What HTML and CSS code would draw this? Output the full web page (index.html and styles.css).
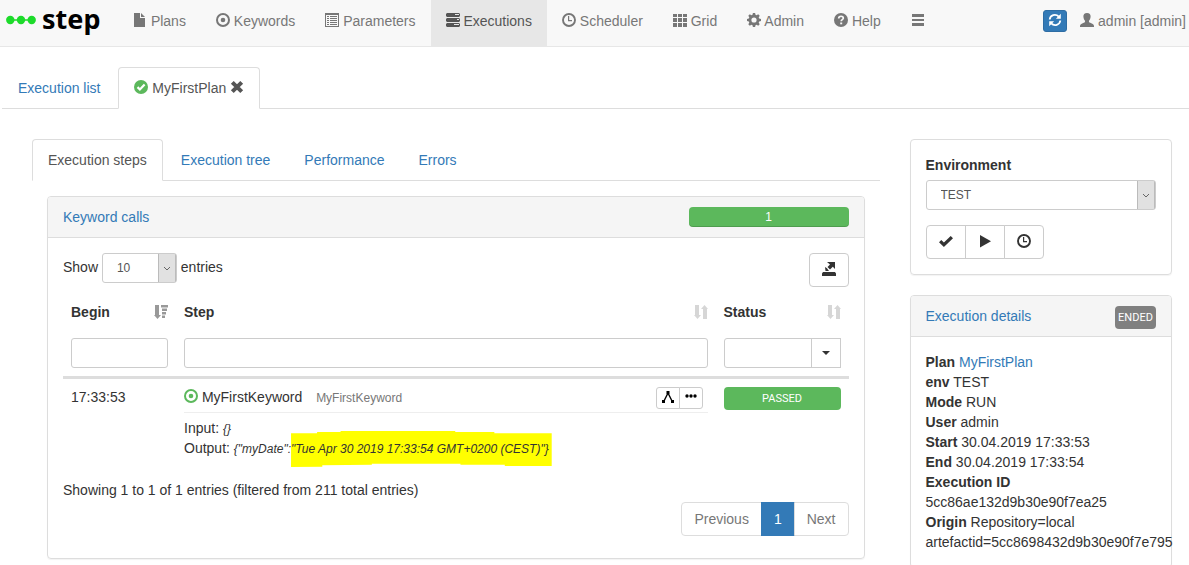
FILE: index.html
```html
<!DOCTYPE html>
<html lang="en">
<head>
    <meta charset="UTF-8">
    <meta name="viewport" content="width=device-width, initial-scale=1.0">
    <title>step - Executions</title>
    <link rel="stylesheet" href="styles.css">
</head>
<body>

    <!-- Icon set -->
    <svg class="icon-defs" aria-hidden="true">
        <symbol id="file" viewBox="0 0 14 14"><path d="M1 0h6v5h5v9H1z M8 0l4 4H8z"/></symbol>
        <symbol id="record" viewBox="0 0 14 14"><circle cx="7" cy="7" r="6" fill="none" stroke="currentColor" stroke-width="2"/><circle cx="7" cy="7" r="2.3"/></symbol>
        <symbol id="list" viewBox="0 0 14 14"><path fill-rule="evenodd" d="M0 0h14v14H0z M1 2v11h12V2z M2 3h2v1H2z M2 5h2v1H2z M2 7h2v1H2z M2 9h2v1H2z M2 11h2v1H2z M5 3h7v1H5z M5 5h7v1H5z M5 7h7v1H5z M5 9h7v1H5z M5 11h7v1H5z"/></symbol>
        <symbol id="tasks" viewBox="0 0 14 14"><path fill-rule="evenodd" d="M1 0h12l1 1v2l-1 1H1L0 3V1z M9 1v1h4V1z M1 5h12l1 1v2l-1 1H1L0 8V6z M11 6v1h2V6z M1 10h12l1 1v2l-1 1H1l-1-1v-2z M8 11v1h5v-1z"/></symbol>
        <symbol id="time" viewBox="0 0 14 14"><circle cx="7" cy="7" r="6" fill="none" stroke="currentColor" stroke-width="1.9"/><path d="M6 3h1.200v4H10v1.200H6z"/></symbol>
        <symbol id="grid" viewBox="0 0 14 14"><path d="M0 1h4v3H0z M5 1h4v3H5z M10 1h4v3h-4z M0 5h4v4H0z M5 5h4v4H5z M10 5h4v4h-4z M0 10h4v4H0z M5 10h4v4H5z M10 10h4v4h-4z"/></symbol>
        <symbol id="cog" viewBox="0 0 14 14"><path fill-rule="evenodd" d="M5.900 0h2.200l.4 1.800 1.100.5 1.600-1 1.500 1.500-1 1.600.5 1.100 1.800.4v2.200l-1.800.4-.5 1.100 1 1.600-1.500 1.500-1.600-1-1.100.5-.4 1.800H5.900l-.4-1.800-1.100-.5-1.600 1-1.500-1.500 1-1.600-.5-1.100L0 8.100V5.900l1.800-.4.5-1.100-1-1.600 1.500-1.500 1.600 1 1.100-.5z M7 4.400a2.600 2.600 0 1 0 0 5.200a2.600 2.600 0 1 0 0-5.200z"/></symbol>
        <symbol id="question" viewBox="0 0 14 14"><circle cx="7" cy="7" r="7"/><path d="M4.700 5.600C4.700 2.500 9.400 2.600 9.300 5.200C9.200 6.800 7.200 6.500 7.200 8.300" fill="none" stroke="#f8f8f8" stroke-width="1.700"/><path d="M6.200 9.500h2v1.800h-2z" fill="#f8f8f8"/></symbol>
        <symbol id="menu" viewBox="0 0 14 14"><path d="M1 1h12v3H1z M1 6h12v2H1z M1 10h12v3H1z"/></symbol>
        <symbol id="refresh" viewBox="0 0 14 14"><g fill="none" stroke="currentColor" stroke-width="1.800"><path d="M1.700 6.500C2.200 2 7.500.3 10.800 3.600"/><path d="M12.300 7.500C11.800 12 6.500 13.700 3.200 10.400"/></g><path d="M12.800.800v5H7.900z M1.200 13.200v-5h4.900z"/></symbol>
        <symbol id="user" viewBox="0 0 14 14"><path d="M7 0c2.500 0 3.800 1.500 3.600 3.700-.2 2-.8 3.200-1.600 4-.2 1.300 0 1.500 1.200 2 2.500 1 3.800 1.500 3.800 3.600v.7H0v-.7c0-2.100 1.300-2.600 3.800-3.600C5 9.200 5.200 9 5 7.700c-.8-.8-1.400-2-1.600-4C3.200 1.500 4.500 0 7 0z"/></symbol>
        <symbol id="ok-circle" viewBox="0 0 14 14"><circle cx="7" cy="7" r="7"/><path d="M3.500 7.100l2.400 2.400 4.700-4.900" fill="none" stroke="#fff" stroke-width="2.200"/></symbol>
        <symbol id="remove" viewBox="0 0 14 14"><path d="M2.300 2.300l9.400 9.400M11.700 2.300l-9.400 9.400" stroke="currentColor" stroke-width="4"/></symbol>
        <symbol id="export" viewBox="0 0 14 14"><path d="M5 0h8v7l-2.200-2.200L8 7.500 5.500 5 8 2.400z M3 5l2 1.200 2 2.800H3.500z M1 10h12l1 1.500V14H0v-2.500z"/></symbol>
        <symbol id="sort" viewBox="0 0 14 14"><path d="M1 0h4v10h2l-3.500 4L0 10h1z M9 14V4H7l3.500-4L14 4h-1v10z"/></symbol>
        <symbol id="sort-desc" viewBox="0 0 14 14"><path d="M1 0h4v10h2l-3.500 4L0 10h1z M7 0h8v2.500H7z M8 3.500h5V6H8z M8 7h4v2.500H8z M8 10.500h3V13H8z"/></symbol>
        <symbol id="tree" viewBox="0 0 14 14"><path d="M3 11l4-8 4 8" fill="none" stroke="currentColor" stroke-width="1.400"/><path d="M5.500 1h3v3h-3z M1 10h3v3H1z M10 10h3v3h-3z"/></symbol>
        <symbol id="dots" viewBox="0 0 14 14"><circle cx="3" cy="6" r="1.700"/><circle cx="7" cy="6" r="1.700"/><circle cx="11" cy="6" r="1.700"/></symbol>
        <symbol id="ok" viewBox="0 0 14 14"><path d="M0 8.300L2.300 6l2.600 2.500L11.700 2 14 4.300 4.900 13z"/></symbol>
        <symbol id="play" viewBox="0 0 14 14"><path d="M2 1l11 6.200L2 13.400z"/></symbol>
    </svg>

    <nav class="navbar">
        <a class="brand" href="#">
            <svg class="brand-dots" viewBox="0 0 30 10" aria-hidden="true"><path d="M4 5h22" stroke="#1ddb2b" stroke-width="1.500"/><circle cx="4.300" cy="5" r="4.200"/><circle cx="15" cy="5" r="4.200"/><circle cx="25.700" cy="5" r="4.200"/></svg>
            <span class="brand-name">step</span>
        </a>
        <ul class="nav-menu">
            <li><a href="#"><svg class="icon"><use href="#file"/></svg> Plans</a></li>
            <li><a href="#"><svg class="icon"><use href="#record"/></svg> Keywords</a></li>
            <li><a href="#"><svg class="icon"><use href="#list"/></svg> Parameters</a></li>
            <li class="active"><a href="#"><svg class="icon"><use href="#tasks"/></svg> Executions</a></li>
            <li><a href="#"><svg class="icon"><use href="#time"/></svg> Scheduler</a></li>
            <li><a href="#"><svg class="icon"><use href="#grid"/></svg> Grid</a></li>
            <li><a href="#"><svg class="icon"><use href="#cog"/></svg> Admin</a></li>
            <li><a href="#"><svg class="icon"><use href="#question"/></svg> Help</a></li>
            <li><a href="#" aria-label="Menu"><svg class="icon"><use href="#menu"/></svg></a></li>
        </ul>
        <div class="nav-right">
            <button class="btn-refresh" type="button" aria-label="Refresh"><svg class="icon"><use href="#refresh"/></svg></button>
            <a class="user" href="#"><svg class="icon"><use href="#user"/></svg> admin [admin]</a>
        </div>
    </nav>

    <ul class="tabs main-tabs">
        <li><a class="tab" href="#">Execution list</a></li>
        <li>
            <div class="tab active">
                <a href="#"><svg class="icon green"><use href="#ok-circle"/></svg> MyFirstPlan</a>
                <button class="btn-close" type="button" aria-label="Close"><svg class="icon"><use href="#remove"/></svg></button>
            </div>
        </li>
    </ul>

    <div class="row">
        <main class="col-main">
            <ul class="tabs">
                <li><a class="tab active" href="#">Execution steps</a></li>
                <li><a class="tab" href="#">Execution tree</a></li>
                <li><a class="tab" href="#">Performance</a></li>
                <li><a class="tab" href="#">Errors</a></li>
            </ul>

            <section class="panel steps-panel">
                <div class="panel-heading">
                    <a href="#">Keyword calls</a>
                    <div class="progress">1</div>
                </div>
                <div class="panel-body">
                    <div class="toolbar">
                        <label>Show
                            <select class="select select-small"><option>10</option></select>
                            entries</label>
                        <button class="btn" type="button" aria-label="Export"><svg class="icon"><use href="#export"/></svg></button>
                    </div>

                    <table class="steps">
                        <colgroup>
                            <col class="col-begin">
                            <col>
                            <col class="col-status">
                        </colgroup>
                        <thead>
                            <tr>
                                <th><div class="th">Begin <svg class="icon sorted"><use href="#sort-desc"/></svg></div></th>
                                <th><div class="th">Step <svg class="icon unsorted"><use href="#sort"/></svg></div></th>
                                <th><div class="th">Status <svg class="icon unsorted"><use href="#sort"/></svg></div></th>
                            </tr>
                            <tr class="filters">
                                <td><input class="filter" type="text" aria-label="Begin"></td>
                                <td><input class="filter" type="text" aria-label="Step"></td>
                                <td>
                                    <div class="input-group">
                                        <input class="filter" type="text" aria-label="Status">
                                        <button class="btn-caret" type="button" aria-label="Choose status"><span class="caret"></span></button>
                                    </div>
                                </td>
                            </tr>
                        </thead>
                        <tbody>
                            <tr>
                                <td>17:33:53</td>
                                <td>
                                    <div class="step-head">
                                        <div><svg class="icon green"><use href="#record"/></svg> MyFirstKeyword <small class="keyword">MyFirstKeyword</small></div>
                                        <div class="btn-group">
                                            <button class="btn btn-xs" type="button" aria-label="Show in tree"><svg class="icon"><use href="#tree"/></svg></button>
                                            <button class="btn btn-xs" type="button" aria-label="More"><svg class="icon"><use href="#dots"/></svg></button>
                                        </div>
                                    </div>
                                    <div>Input: <em class="json">{}</em></div>
                                    <div>Output: <em class="json">{"myDate":<mark>"Tue Apr 30 2019 17:33:54 GMT+0200 (CEST)"}</mark></em></div>
                                </td>
                                <td><div class="badge passed">PASSED</div></td>
                            </tr>
                        </tbody>
                    </table>

                    <div class="info">Showing 1 to 1 of 1 entries (filtered from 211 total entries)</div>
                    <ul class="pagination">
                        <li><a href="#">Previous</a></li>
                        <li class="active"><a href="#">1</a></li>
                        <li><a href="#">Next</a></li>
                    </ul>
                </div>
            </section>
        </main>

        <aside class="col-side">
            <section class="panel">
                <div class="panel-body">
                    <label class="env-label" for="environment">Environment</label>
                    <select class="select select-wide" id="environment"><option>TEST</option></select>
                    <div class="btn-group">
                        <button class="btn" type="button" aria-label="Simulate"><svg class="icon"><use href="#ok"/></svg></button>
                        <button class="btn" type="button" aria-label="Run"><svg class="icon"><use href="#play"/></svg></button>
                        <button class="btn" type="button" aria-label="Schedule"><svg class="icon"><use href="#time"/></svg></button>
                    </div>
                </div>
            </section>

            <section class="panel">
                <div class="panel-heading">
                    <a href="#">Execution details</a>
                    <div class="badge ended">ENDED</div>
                </div>
                <div class="panel-body">
                    <div><b>Plan</b> <a href="#">MyFirstPlan</a></div>
                    <div><b>env</b> TEST</div>
                    <div><b>Mode</b> RUN</div>
                    <div><b>User</b> admin</div>
                    <div><b>Start</b> 30.04.2019 17:33:53</div>
                    <div><b>End</b> 30.04.2019 17:33:54</div>
                    <div><b>Execution ID</b></div>
                    <div>5cc86ae132d9b30e90f7ea25</div>
                    <div><b>Origin</b> Repository=local</div>
                    <div>artefactid=5cc8698432d9b30e90f7e795</div>
                </div>
            </section>
        </aside>
    </div>

</body>
</html>
```
FILE: styles.css
```css
* {
    box-sizing: border-box;
}

body {
    margin: 0;
    background-color: #fff;
    color: #333;
    font-family: "Liberation Sans", Arial, sans-serif;
    font-size: 14px;
    line-height: 20px;
}

a {
    color: #337ab7;
    text-decoration: none;
}

ul {
    list-style: none;
    margin: 0;
    padding: 0;
}

button,
input,
select {
    font-family: inherit;
    color: inherit;
}

button {
    cursor: pointer;
}

.icon-defs {
    display: none;
}

.icon {
    width: 14px;
    height: 14px;
    fill: currentColor;
    vertical-align: -1px;
}

.green {
    color: #5cb85c;
}

/* Navbar */
.navbar {
    display: flex;
    background-color: #f8f8f8;
    border-bottom: 1px solid #e7e7e7;
}

.brand {
    display: flex;
    align-items: center;
    width: 118px;
    padding: 0 0 7px 6px;
    gap: 6px;
    color: #000;
}

.brand-dots {
    width: 30px;
    height: 10px;
    fill: #1ddb2b;
}

.brand-name {
    padding-bottom: 2px;
    font-family: "Noto Sans", "Open Sans", sans-serif;
    font-size: 27px;
    font-weight: bold;
    line-height: 32px;
}

.nav-menu {
    display: flex;
}

.nav-menu a {
    display: block;
    padding: 11px 15px 15px;
    color: #777;
}

.nav-menu .active a {
    background-color: #e7e7e7;
    color: #555;
}

.nav-right {
    display: flex;
    align-items: flex-start;
    gap: 13px;
    margin-left: auto;
    padding: 10px 3px 0 0;
}

.btn-refresh {
    width: 24px;
    height: 22px;
    padding: 0;
    border: 1px solid #2e6da4;
    border-radius: 3px;
    background-color: #337ab7;
    color: #fff;
}

.user {
    padding-top: 1px;
    color: #777;
}

/* Tabs */
.tabs {
    display: flex;
    border-bottom: 1px solid #ddd;
}

.main-tabs {
    margin: 20px 0 30px 2px;
}

.tabs li {
    margin: 0 2px -1px 0;
}

.tab {
    display: block;
    padding: 10px 15px;
    border: 1px solid transparent;
    border-radius: 4px 4px 0 0;
}

.tab.active {
    border-color: #ddd #ddd #fff;
    background-color: #fff;
    color: #555;
}

.tab.active a {
    color: #555;
}

.btn-close {
    padding: 0;
    border: 0;
    background: none;
    color: #555;
    font-size: 14px;
    line-height: 20px;
}

/* Columns */
.row {
    display: flex;
    margin: 0 2px 0 17px;
}

.col-main {
    width: 75%;
    padding: 0 15px;
}

.col-side {
    width: 25%;
    padding: 0 15px;
}

/* Panels */
.panel {
    margin-bottom: 20px;
    border: 1px solid #ddd;
    border-radius: 4px;
    box-shadow: 0 1px 1px rgba(0, 0, 0, 0.05);
}

.steps-panel {
    margin: 15px 15px 0;
}

.steps-panel .panel-body {
    padding-bottom: 22px;
}

.panel-heading {
    display: flex;
    justify-content: space-between;
    align-items: flex-start;
    height: 41px;
    padding: 10px 15px;
    border-bottom: 1px solid #ddd;
    border-radius: 3px 3px 0 0;
    background-color: #f5f5f5;
}

.panel-body {
    padding: 15px;
}

.progress {
    width: 160px;
    height: 20px;
    border-radius: 4px;
    background-color: #5cb85c;
    box-shadow: inset 0 -1px 0 rgba(0, 0, 0, 0.15);
    color: #fff;
    font-size: 12px;
    text-align: center;
}

.badge {
    padding: 1px 4px 0;
    border-radius: 4px;
    color: #fff;
    font-family: Roboto, sans-serif;
    font-size: 11px;
    line-height: 22px;
    text-align: center;
}

.passed {
    background-color: #5cb85c;
}

.ended {
    min-width: 41px;
    padding: 1px 3px 0;
    background-color: #808080;
}

/* Form controls and buttons */
.select {
    height: 30px;
    padding: 0 24px 0 14px;
    border: 1px solid #ccc;
    border-radius: 3px;
    appearance: none;
    background: #fff url("data:image/svg+xml,%3Csvg xmlns='http://www.w3.org/2000/svg' width='18' height='28'%3E%3Cpath d='M0 0h18v28H0z' fill='%23e1e1e1'/%3E%3Cpath d='M.5 0v28M17.5 0v28' stroke='%23bbb'/%3E%3Cpath d='M6 13l3 3 3-3' fill='none' stroke='%23666'/%3E%3C/svg%3E") right center no-repeat;
    color: #555;
    font-size: 12px;
}

.select-small {
    width: 75px;
}

.select-wide {
    display: block;
    width: 100%;
    margin-bottom: 15px;
}

.env-label {
    display: block;
    margin-bottom: 5px;
    font-weight: bold;
}

.btn {
    width: 40px;
    height: 34px;
    padding: 0;
    border: 1px solid #ccc;
    border-radius: 4px;
    background-color: #fff;
}

.btn-group {
    display: flex;
}

.btn-group .btn + .btn {
    margin-left: -1px;
}

.btn-group .btn:not(:last-child) {
    border-top-right-radius: 0;
    border-bottom-right-radius: 0;
}

.btn-group .btn:not(:first-child) {
    border-top-left-radius: 0;
    border-bottom-left-radius: 0;
}

.btn-xs {
    width: 24px;
    height: 22px;
    border-radius: 3px;
    color: #000;
}

.toolbar {
    display: flex;
    justify-content: space-between;
    align-items: flex-start;
    margin-bottom: 7px;
}

/* Steps table */
.steps {
    width: 100%;
    border-collapse: collapse;
    table-layout: fixed;
}

.col-begin {
    width: 113px;
}

.col-status {
    width: 133px;
}

.steps th,
.steps td {
    padding: 8px;
    text-align: left;
    vertical-align: top;
}

.steps tbody {
    border-top: 3px solid #ddd;
}

.th {
    display: flex;
    justify-content: space-between;
    align-items: center;
}

.sorted {
    color: #999;
    overflow: visible;
}

.unsorted {
    color: #d6d6d6;
}

.filter {
    display: block;
    width: 100%;
    height: 30px;
    padding: 5px 10px;
    border: 1px solid #ccc;
    border-radius: 3px;
    font-size: 12px;
}

.input-group {
    display: flex;
}

.input-group .filter {
    min-width: 0;
    border-radius: 3px 0 0 3px;
}

.btn-caret {
    display: flex;
    flex: 0 0 30px;
    align-items: center;
    justify-content: center;
    margin-left: -1px;
    padding: 0;
    border: 1px solid #ccc;
    background-color: #fff;
}

.caret {
    border-top: 4px solid #333;
    border-right: 4px solid transparent;
    border-left: 4px solid transparent;
}

.step-head {
    display: flex;
    justify-content: space-between;
    margin-bottom: 5px;
    padding: 0 5px 3px 0;
    border-bottom: 1px solid #eee;
}

.keyword {
    margin-left: 10px;
    color: #777;
    font-size: 12px;
}

.json {
    font-size: 12px;
    line-height: 1;
}

/* Marker stroke with uneven edges */
mark {
    padding: 11px 3px 11px 0;
    background-color: #ff0;
    color: inherit;
    clip-path: polygon(0 6%, 10% 6%, 10% 3%, 19% 3%, 19% 0, 63% 0, 63% 3%, 78% 3%, 78% 6%, 100% 6%, 100% 97%, 82% 97%, 82% 94%, 65% 94%, 65% 91%, 31% 91%, 31% 94%, 12% 95%, 12% 99%, 0 100%);
}

.info {
    margin-top: 14px;
}

.pagination {
    display: flex;
    justify-content: flex-end;
    margin-top: 2px;
}

.pagination a {
    display: block;
    margin-left: -1px;
    padding: 6px 12px;
    border: 1px solid #ddd;
    color: #777;
}

.pagination li:first-child a {
    border-radius: 4px 0 0 4px;
}

.pagination li:last-child a {
    border-radius: 0 4px 4px 0;
}

.pagination .active a {
    border-color: #337ab7;
    background-color: #337ab7;
    color: #fff;
}
```
